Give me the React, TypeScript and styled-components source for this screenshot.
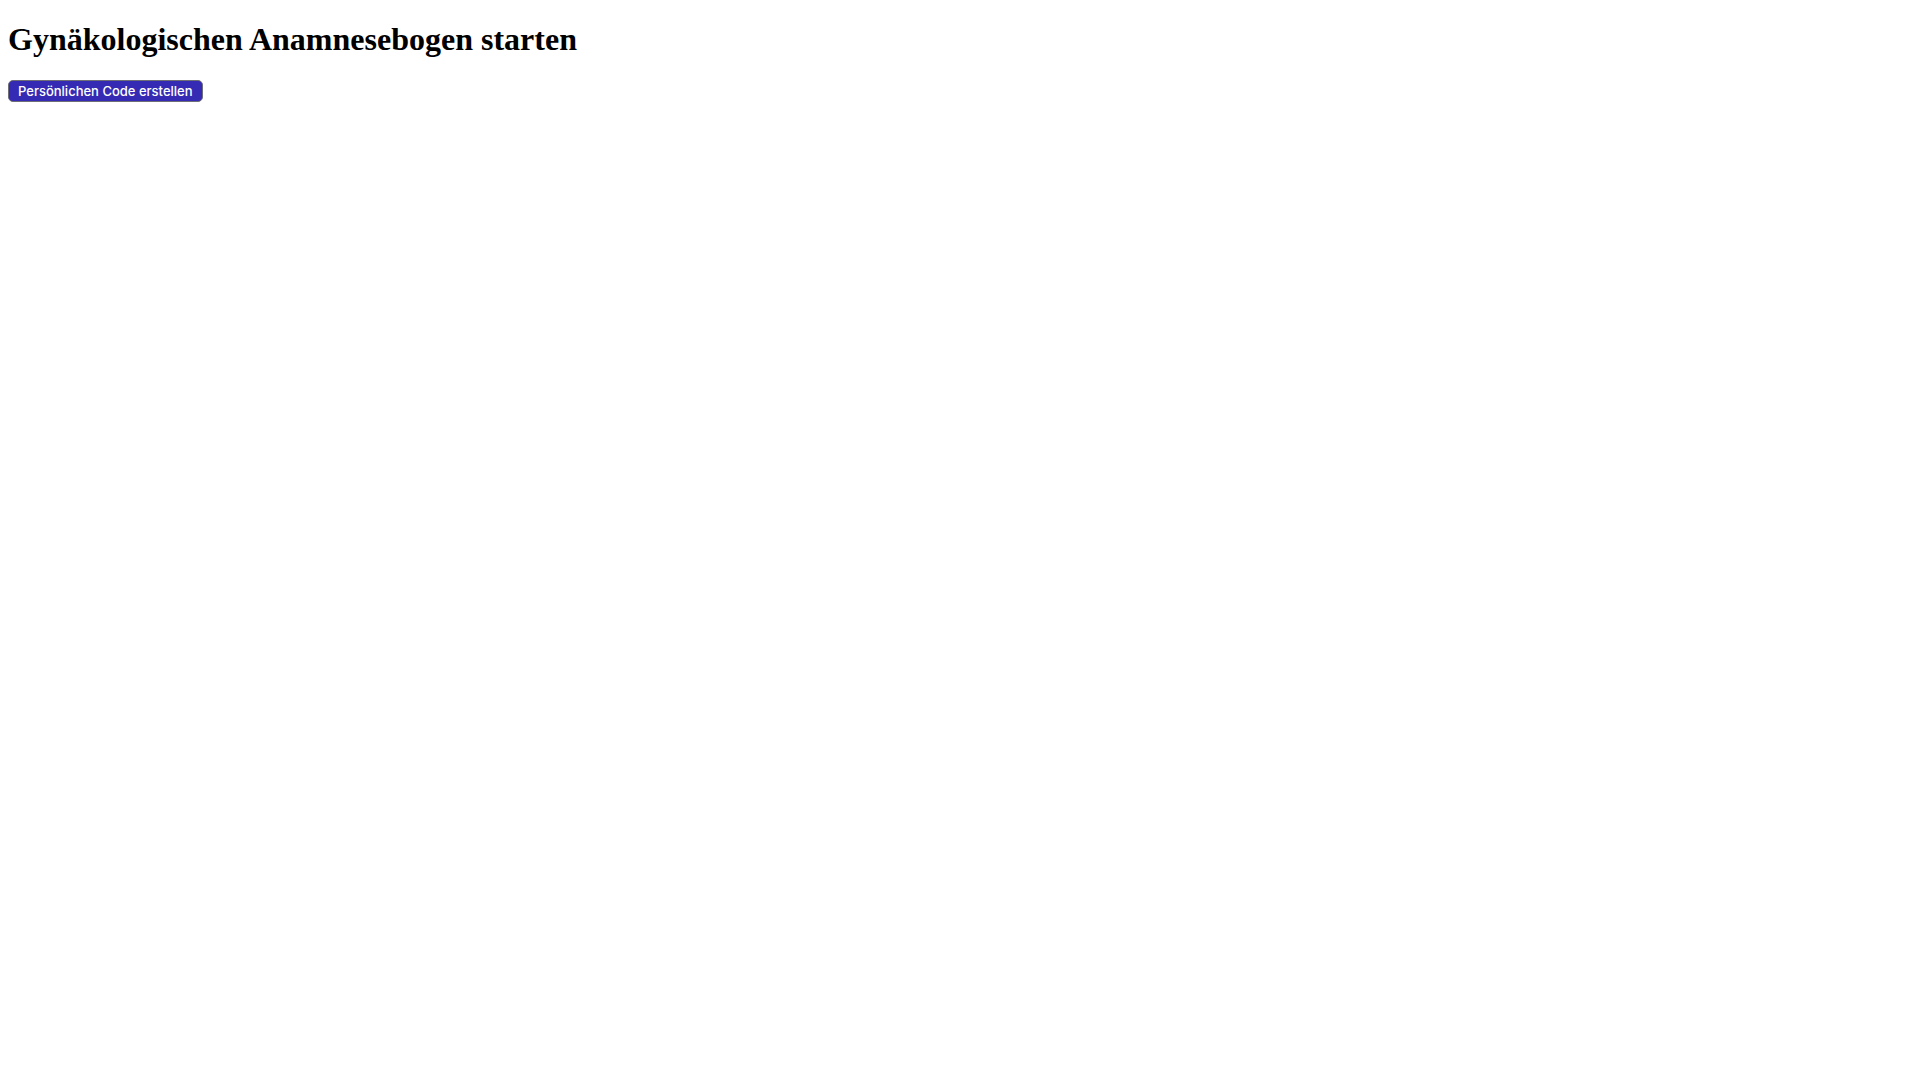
import React from "react";
import styled, { createGlobalStyle } from "styled-components";

const GlobalStyle = createGlobalStyle`
  body {
    margin: 0 8px;
    background: #ffffff;
    color: #000000;
    font-family: "Liberation Serif", "Times New Roman", serif;
    font-size: 16px;
  }
`;

const Title = styled.h1`
  margin: 21px 0 22px;
  font-size: 32px;
  font-weight: 700;
`;

const PrimaryButton = styled.button`
  padding: 2px 9px;
  border: 1px solid #6e6e76;
  border-radius: 5px;
  background: #352ab3;
  color: #ffffff;
  font-family: Inter, "Liberation Sans", sans-serif;
  font-size: 13px;
  line-height: 16px;
  font-weight: 500;
  cursor: pointer;
`;

export default function App() {
  return (
    <main>
      <GlobalStyle />
      <Title>Gynäkologischen Anamnesebogen starten</Title>
      <PrimaryButton type="button">Persönlichen Code erstellen</PrimaryButton>
    </main>
  );
}
